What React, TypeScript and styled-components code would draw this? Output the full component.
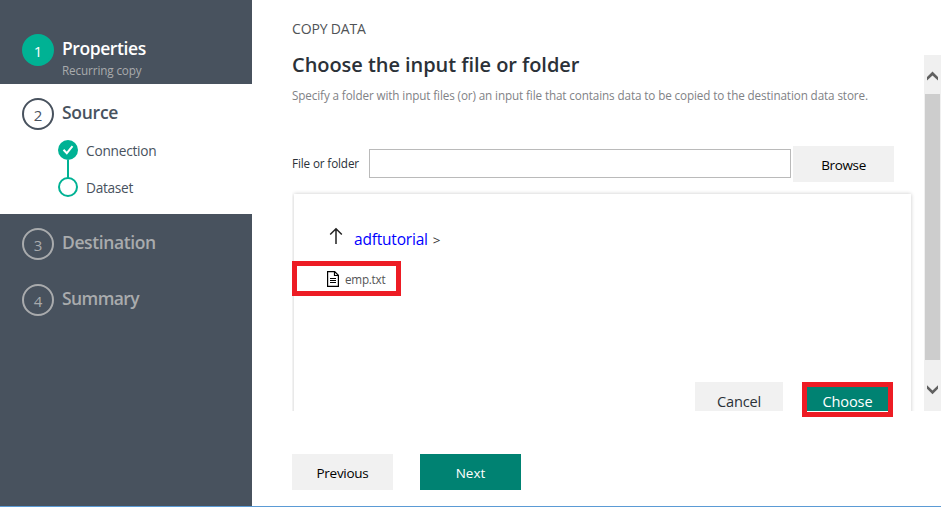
import React from 'react';
import styled, { createGlobalStyle } from 'styled-components';

const GlobalStyle = createGlobalStyle`
  * { box-sizing: border-box; }
  body {
    margin: 0;
    background: #fff;
    overflow: hidden;
    font-family: "Open Sans", "Noto Sans", sans-serif;
  }
`;

type TextProps = { $size: number; $line: number; $track?: number; $color?: string; $weight?: number };

const Text = styled.span<TextProps>`
  display: block;
  white-space: nowrap;
  font-size: ${(p) => p.$size}px;
  line-height: ${(p) => p.$line}px;
  letter-spacing: ${(p) => p.$track ?? 0}px;
  color: ${(p) => p.$color ?? 'inherit'};
  font-weight: ${(p) => p.$weight ?? 400};
`;

const Page = styled.div`
  display: flex;
  width: 941px;
  height: 507px;
  border-bottom: 1px solid #5b9bd5;
`;

const Sidebar = styled.nav`
  width: 252px;
  background: #48525e;
`;

const Step = styled.section<{ $height: number; $top: number; $active?: boolean }>`
  height: ${(p) => p.$height}px;
  padding: ${(p) => p.$top}px 0 0 22px;
  background: ${(p) => (p.$active ? '#fff' : 'transparent')};
`;

const StepHead = styled.div`
  display: flex;
  gap: 7px;
`;

const Badge = styled.div<{ $color: string; $fill?: string; $border: string }>`
  width: 32px;
  height: 32px;
  padding-top: 3px;
  border: 2px solid ${(p) => p.$border};
  border-radius: 50%;
  background: ${(p) => p.$fill ?? 'transparent'};
  color: ${(p) => p.$color};
  font-size: 15px;
  line-height: 24px;
  text-align: center;
`;

const StepText = styled.div`
  padding: 3px 0 0 1px;
`;

const SubSteps = styled.div`
  display: flex;
  gap: 8px;
  margin: 10px 0 0 36px;
`;

const SubLabels = styled.div`
  display: flex;
  flex-direction: column;
  gap: 17px;
  padding-top: 1px;
`;

const Main = styled.main`
  flex: 1;
  display: flex;
  flex-direction: column;
  padding-left: 40px;
`;

const Viewport = styled.div`
  position: relative;
  display: flex;
  height: 359px;
`;

const Header = styled.header`
  height: 52px;
  padding-top: 19px;
`;

const Content = styled.div`
  width: 632px;
  padding-left: 0;
  overflow: hidden;
`;

const FieldRow = styled.div`
  display: flex;
  align-items: center;
  height: 36px;
  margin-top: 33px;
`;

const FieldLabel = styled.div`
  width: 77px;
  margin-top: -2px;
`;

const Input = styled.input`
  width: 422px;
  height: 29px;
  margin: -2px 2px 0 0;
  border: 1px solid #bababa;
  background: #fff;
`;

const Button = styled.button<{ $width: number; $primary?: boolean; $ink?: string }>`
  display: flex;
  justify-content: center;
  width: ${(p) => p.$width}px;
  height: 36px;
  padding: 8px 0 0;
  border: 0;
  font-family: inherit;
  background: ${(p) => (p.$primary ? '#008272' : '#f1f1f1')};
  color: ${(p) => (p.$primary ? '#fff' : p.$ink ?? '#000')};
`;

const Browser = styled.div`
  width: 617px;
  height: 260px;
  margin: 12px 0 0 2px;
  padding-top: 33px;
  box-shadow: 0 0 4px rgba(0, 0, 0, 0.22);
`;

const Crumbs = styled.div`
  display: flex;
  height: 34px;
  padding-left: 35px;
`;

const CrumbLink = styled(Text)`
  margin: -1px 5px 0 11px;
`;

const FileMark = styled.div`
  width: 109px;
  height: 35px;
  margin-left: -2px;
  border: 5px solid #ed1c24;
`;

const FileRow = styled.div`
  display: flex;
  align-items: center;
  gap: 5px;
  height: 25px;
  padding-left: 30px;
`;

const Actions = styled.div`
  display: flex;
  gap: 19px;
  margin: 86px 0 0 401px;
`;

/* Highlight frame laid over the Choose button, past the scrolled area's edge. */
const ChooseMark = styled.div`
  position: absolute;
  top: 330px;
  left: 510px;
  width: 91px;
  height: 35px;
  border: 5px solid #ed1c24;
  pointer-events: none;
`;

const Scrollbar = styled.div`
  display: flex;
  flex-direction: column;
  align-items: center;
  width: 17px;
  margin-top: 3px;
  background: #f0f0f0;
`;

const ScrollArrow = styled.div<{ $height: number; $top: number }>`
  height: ${(p) => p.$height}px;
  padding-top: ${(p) => p.$top}px;
  line-height: 0;
`;

const Thumb = styled.div`
  width: 15px;
  height: 266px;
  background: #cdcdcd;
`;

const Footer = styled.footer`
  display: flex;
  gap: 27px;
  margin-top: 43px;
`;

const teal = '#00b294';
const muted = '#a9abad';
const slate = '#48525e';

export default function App() {
  return (
    <>
      <GlobalStyle />
      <Page>
        <Sidebar>
          <Step $height={84} $top={34}>
            <StepHead>
              <Badge $color="#fff" $fill={teal} $border={teal}>1</Badge>
              <StepText>
                <Text $size={17.5} $line={22} $track={-0.42} $weight={600} $color="#fff">Properties</Text>
                <Text $size={11.7} $line={22} $track={-0.12} $color={muted}>Recurring copy</Text>
              </StepText>
            </StepHead>
          </Step>
          <Step $height={130} $top={14} $active>
            <StepHead>
              <Badge $color={slate} $border={slate}>2</Badge>
              <StepText>
                <Text $size={17.5} $line={22} $track={-0.27} $weight={600} $color={slate}>Source</Text>
              </StepText>
            </StepHead>
            <SubSteps>
              <svg width="20" height="57" viewBox="0 0 20 57" fill="none">
                <circle cx="10" cy="10" r="10" fill={teal} />
                <path d="M5.5 9.8 8.8 13.2 14.5 6.2" stroke="#fff" strokeWidth="2" />
                <path d="M10 20V38" stroke={teal} strokeWidth="2" />
                <circle cx="10" cy="47" r="9" stroke={teal} strokeWidth="2" />
              </svg>
              <SubLabels>
                <Text $size={13.7} $line={20} $track={-0.24} $color={slate}>Connection</Text>
                <Text $size={13.7} $line={20} $track={-0.3} $color={slate}>Dataset</Text>
              </SubLabels>
            </SubSteps>
          </Step>
          <Step $height={56} $top={14}>
            <StepHead>
              <Badge $color={muted} $border={muted}>3</Badge>
              <StepText>
                <Text $size={17.5} $line={22} $track={-0.4} $weight={600} $color={muted}>Destination</Text>
              </StepText>
            </StepHead>
          </Step>
          <Step $height={56} $top={14}>
            <StepHead>
              <Badge $color={muted} $border={muted}>4</Badge>
              <StepText>
                <Text $size={17.5} $line={22} $track={-0.6} $weight={600} $color={muted}>Summary</Text>
              </StepText>
            </StepHead>
          </Step>
        </Sidebar>
        <Main>
          <Header>
            <Text $size={14} $line={20} $track={-0.15} $color="#505356">COPY DATA</Text>
          </Header>
          <Viewport>
            <Content>
              <Text $size={20} $line={26} $track={-0.05} $weight={600} $color="#2b3138">Choose the input file or folder</Text>
              <Text $size={11.7} $line={35} $track={-0.115} $color="#7f8286">
                Specify a folder with input files (or) an input file that contains data to be copied to the destination data store.
              </Text>
              <FieldRow>
                <FieldLabel>
                  <Text $size={11.7} $line={20} $track={-0.13} $color="#2b3138">File or folder</Text>
                </FieldLabel>
                <Input aria-label="File or folder" />
                <Button $width={101}>
                  <Text $size={13.5} $line={22} $track={-0.35}>Browse</Text>
                </Button>
              </FieldRow>
              <Browser>
                <Crumbs>
                  <svg width="14" height="18" viewBox="0 0 14 18" fill="none" stroke="#222" strokeWidth="1.5">
                    <path d="M7 17V2M1.2 7.5 7 1.7 12.8 7.5" />
                  </svg>
                  <CrumbLink as="a" $size={15.5} $line={26} $track={-0.2} $color="#0000ff">adftutorial</CrumbLink>
                  <Text $size={13.5} $line={26} $color="#333">&gt;</Text>
                </Crumbs>
                <FileMark>
                  <FileRow>
                    <svg width="13" height="16" viewBox="0 0 13 16" fill="none" stroke="#000">
                      <path d="M.6.6H7.7L11.4 4.3V15.4H.6ZM7.5.6V4.5H11.4" strokeWidth="1.2" />
                      <path d="M3 7.5H9M3 9.5H9M3 11.5H9" />
                    </svg>
                    <Text $size={11.7} $line={20} $track={-0.25} $color="#555">emp.txt</Text>
                  </FileRow>
                </FileMark>
                <Actions>
                  <Button $width={88} $ink="#2b3138">
                    <Text $size={14.6} $line={22} $track={-0.15}>Cancel</Text>
                  </Button>
                  <Button $width={91} $primary>
                    <Text $size={14.6} $line={22} $track={-0.15}>Choose</Text>
                  </Button>
                </Actions>
              </Browser>
            </Content>
            <Scrollbar>
              <ScrollArrow $height={39} $top={16}>
                <svg width="11" height="10" viewBox="0 0 11 10" fill="#606060">
                  <path d="M5.5 .6 11 6.1V9.6L5.5 4.4 0 9.6V6.1Z" />
                </svg>
              </ScrollArrow>
              <Thumb />
              <ScrollArrow $height={51} $top={25}>
                <svg width="11" height="10" viewBox="0 0 11 10" fill="#606060">
                  <path d="M5.5 9.2 11 3.7V.2L5.5 5.4 0 .2V3.7Z" />
                </svg>
              </ScrollArrow>
            </Scrollbar>
            <ChooseMark />
          </Viewport>
          <Footer>
            <Button $width={101}>
              <Text $size={13.5} $line={22} $track={-0.28}>Previous</Text>
            </Button>
            <Button $width={101} $primary>
              <Text $size={13.5} $line={22}>Next</Text>
            </Button>
          </Footer>
        </Main>
      </Page>
    </>
  );
}
